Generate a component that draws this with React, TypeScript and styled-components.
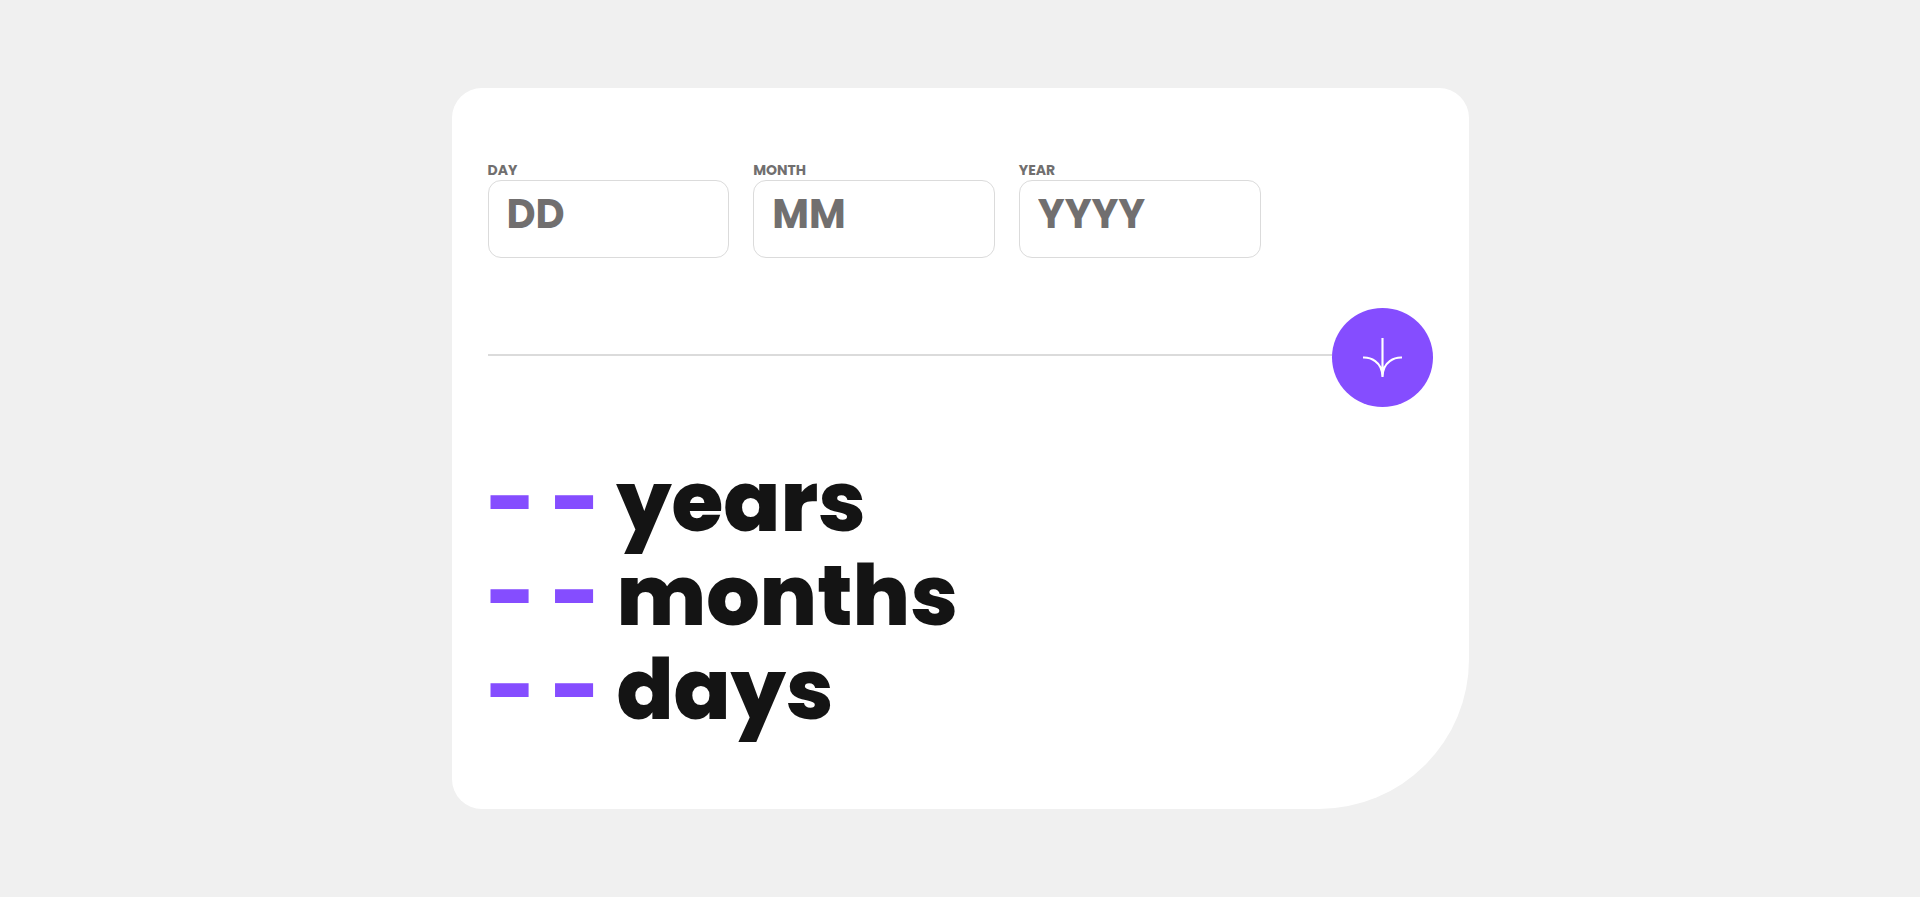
import React, { useState } from "react";
import styled, { createGlobalStyle } from "styled-components";

const GlobalStyle = createGlobalStyle`
  * { box-sizing: border-box; }
  body {
    margin: 0;
    background: #f0f0f0;
    font-family: Poppins, Inter, "Open Sans", sans-serif;
  }
`;

const Page = styled.main`
  min-height: 100vh;
  display: flex;
  align-items: center;
  justify-content: center;
`;

const Card = styled.form`
  width: 53%;
  max-width: 1017px;
  padding: 72px 36px;
  background: #ffffff;
  border-radius: 30px 30px 150px 30px;
`;

const Fields = styled.div`
  display: grid;
  grid-template-columns: repeat(3, 1fr);
  gap: 24px;
  max-width: 773px;
`;

const Field = styled.div`
  display: flex;
  flex-direction: column;
  min-width: 0;
`;

const Label = styled.label`
  color: #716f6f;
  font-size: 14px;
  font-weight: 700;
  line-height: 20px;
`;

const Input = styled.input`
  width: 100%;
  height: 78px;
  padding: 0 18px 10px;
  border: 1px solid #dbdbdb;
  border-radius: 13px;
  outline: none;
  background: transparent;
  color: #141414;
  font: inherit;
  font-size: 40px;
  font-weight: 700;

  &::placeholder {
    color: #716f6f;
    opacity: 1;
  }
  &:focus {
    border-color: #854dff;
  }
`;

const Divider = styled.div`
  display: flex;
  align-items: center;
  margin-top: 50px;
`;

const Line = styled.span`
  flex: 1;
  height: 8px;
  border-top: 2px solid #dbdbdb;
`;

const Submit = styled.button`
  display: flex;
  align-items: center;
  justify-content: center;
  width: 101px;
  height: 99px;
  padding: 0;
  border: 0;
  border-radius: 50%;
  background: #854dff;
  cursor: pointer;
`;

const Results = styled.div`
  margin-top: 48px;
`;

const Result = styled.p`
  display: flex;
  margin: 0;
  color: #141414;
  font-size: 84px;
  font-weight: 800;
  line-height: 94px;
  white-space: pre;
`;

const Value = styled.span`
  min-width: 129px;
  color: #854dff;
`;

const fields = [
  { id: "day", label: "DAY", placeholder: "DD" },
  { id: "month", label: "MONTH", placeholder: "MM" },
  { id: "year", label: "YEAR", placeholder: "YYYY" },
];

export default function App() {
  const [values, setValues] = useState<Record<string, string>>({});

  return (
    <Page>
      <GlobalStyle />
      <Card onSubmit={(e) => e.preventDefault()}>
        <Fields>
          {fields.map(({ id, label, placeholder }) => (
            <Field key={id}>
              <Label htmlFor={id}>{label}</Label>
              <Input
                id={id}
                inputMode="numeric"
                placeholder={placeholder}
                value={values[id] ?? ""}
                onChange={(e) => setValues({ ...values, [id]: e.target.value })}
              />
            </Field>
          ))}
        </Fields>
        <Divider>
          <Line />
          <Submit type="submit" aria-label="Calculate age">
            <svg width="41" height="39" viewBox="0 0 46 44" fill="none" stroke="#fff" strokeWidth="2.4">
              <path d="M1 22.019C8.333 21.686 23 25.616 23 44M23 44V0M45 22.019C37.667 21.686 23 25.616 23 44" />
            </svg>
          </Submit>
        </Divider>
        <Results>
          {["years", "months", "days"].map((unit) => (
            <Result key={unit}>
              <Value>- -</Value>
              <span>{unit}</span>
            </Result>
          ))}
        </Results>
      </Card>
    </Page>
  );
}
